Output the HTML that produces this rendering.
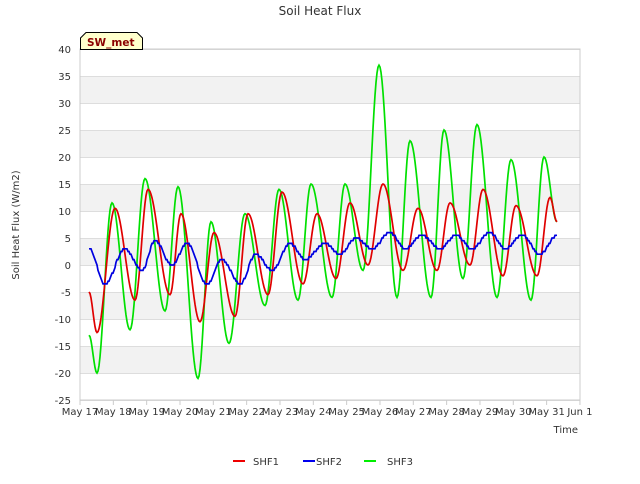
<!DOCTYPE html>
<html><head><meta charset="utf-8"><style>
body{margin:0;background:#fff;font-family:"DejaVu Sans",sans-serif;}
</style></head><body>
<svg id="s" width="640" height="480" xmlns="http://www.w3.org/2000/svg" font-family="DejaVu Sans, sans-serif">
<rect width="640" height="480" fill="#fff"/>
<g id="grid"></g>
<rect x="80" y="49" width="500" height="351" fill="none" stroke="#ccc"/>
<text x="320" y="15" text-anchor="middle" font-size="12" fill="#333">Soil Heat Flux</text>
<text x="19" y="225" text-anchor="middle" font-size="10" fill="#333" transform="rotate(-90 19 225)">Soil Heat Flux (W/m2)</text>
<text x="578" y="433" text-anchor="end" font-size="10" fill="#333">Time</text>
<g id="lbl" font-size="10" fill="#333"></g>
<g id="lines" fill="none" stroke-width="1.7"></g>
<path d="M80.5,49.5 V38 L86,32.5 H137 L142.5,38 V49.5 Z" fill="#ffffcc" stroke="#000"/>
<text x="87" y="46" font-size="10.5" font-weight="bold" fill="#8b0000">SW_met</text>
<g font-size="10" fill="#333">
<line x1="233" y1="461" x2="245" y2="461" stroke="#e00" stroke-width="2"/><text x="253" y="465">SHF1</text>
<line x1="303" y1="461" x2="315" y2="461" stroke="#00e" stroke-width="2"/><text x="316" y="465">SHF2</text>
<line x1="364" y1="461" x2="376" y2="461" stroke="#0e0" stroke-width="2"/><text x="387" y="465">SHF3</text>
</g>
</svg>
<script>
var Y=v=>265-5.4*v, g=document.getElementById('grid'), l=document.getElementById('lbl'), ns='http://www.w3.org/2000/svg';
function el(p,t,a,txt){var e=document.createElementNS(ns,t);for(var k in a)e.setAttribute(k,a[k]);if(txt!==undefined)e.textContent=txt;p.appendChild(e);return e;}
for(var v=40;v>-25;v-=5){var idx=(40-v)/5;if(idx%2==1)el(g,'rect',{x:80,y:Y(v),width:500,height:27,fill:'#f2f2f2'});}
for(var v=40;v>=-25;v-=5){el(g,'line',{x1:80,x2:580,y1:Y(v)+.5,y2:Y(v)+.5,stroke:'#ddd'});el(l,'text',{x:71,y:Y(v)+4,'text-anchor':'end'},v);}
var days=['May 17','May 18','May 19','May 20','May 21','May 22','May 23','May 24','May 25','May 26','May 27','May 28','May 29','May 30','May 31','Jun 1'];
days.forEach((d,i)=>{var x=80+i*33.33;el(l,'line',{x1:x,x2:x,y1:400,y2:405,stroke:'#ccc'});el(l,'text',{x:x,y:415,'text-anchor':'middle'},d);});
function line(pts,col,step){var d='';for(var i=0;i<pts.length-1;i++){var a=pts[i],b=pts[i+1];for(var x=a[0];x<b[0];x+=1){var t=(x-a[0])/(b[0]-a[0]);var v=a[1]+(b[1]-a[1])*(1-Math.cos(Math.PI*t))/2;if(step)v=Math.round(v*2)/2;d+=(d?'L':'M')+x.toFixed(1)+','+Y(v).toFixed(1);}}
var p=pts[pts.length-1];d+='L'+p[0]+','+Y(p[1]);el(document.getElementById('lines'),'path',{d:d,stroke:col});}
line([[89,-13],[97,-20],[112,11.5],[130,-12],[145,16],[165,-8.5],[178,14.5],[198,-21],[211,8],[229,-14.5],[245,9.5],[265,-7.5],[279,14],[298,-6.5],[311,15],[332,-6],[345,15],[363,-1],[379,37],[397,-6],[410,23],[431,-6],[444,25],[463,-2.5],[477,26],[497,-6],[511,19.5],[531,-6.5],[544,20],[557,8]],'#00e000');
line([[89,-5],[97,-12.5],[115,10.5],[135,-6.5],[148,14],[170,-5.5],[181,9.5],[200,-10.5],[214,6],[235,-9.5],[248,9.5],[268,-5.5],[282,13.5],[303,-3.5],[317,9.5],[336,-2.5],[350,11.5],[368,0],[383,15],[403,-1],[418,10.5],[437,-1],[450,11.5],[470,0],[483,14],[503,-2],[516,11],[537,-2],[550,12.5],[557,8]],'#e00000');
line([[89,3],[105,-3.5],[125,3],[142,-1],[155,4.5],[172,0],[187,4],[207,-3.5],[222,1],[240,-3.5],[256,2],[272,-1],[290,4],[305,1],[325,4],[340,2],[356,5],[372,3],[390,6],[405,3],[422,5.5],[440,3],[456,5.5],[472,3],[490,6],[505,3],[522,5.5],[540,2],[557,5.5]],'#0000e0',true);
</script>
</body></html>
